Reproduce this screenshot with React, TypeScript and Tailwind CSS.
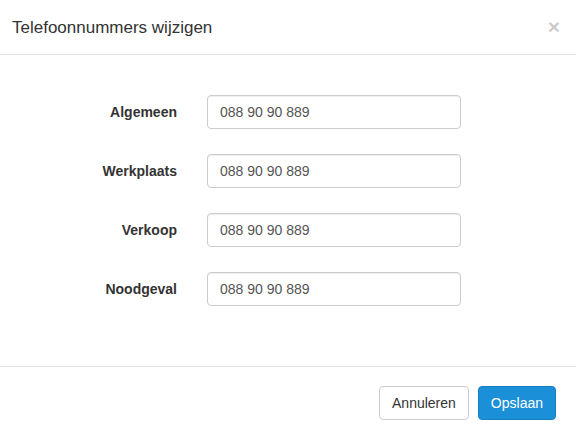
import React from "react";

const rows = ["Algemeen", "Werkplaats", "Verkoop", "Noodgeval"];

export default function App() {
  return (
    <div
      className="w-[576px] h-[440px] bg-white flex flex-col text-[#333] overflow-hidden"
      style={{ fontFamily: '"Liberation Sans", Arial, sans-serif' }}
    >
      <div className="h-[55px] border-b border-[#e5e5e5] flex items-center justify-between pl-[12px] pr-[16px] shrink-0">
        <h4 className="text-[17px] leading-none text-[#333] font-normal">Telefoonnummers wijzigen</h4>
        <span className="text-[21px] font-bold leading-none text-black opacity-20 -mt-[2px]">×</span>
      </div>
      <div className="h-[312px] pt-[40px] flex flex-col gap-[25px] shrink-0 border-b border-[#e5e5e5]">
        {rows.map((r) => (
          <div key={r} className="flex items-center h-[34px]">
            <label className="w-[177px] text-right font-bold text-[14px] text-[#333]">{r}</label>
            <div className="ml-[30px] w-[254px] h-[34px] border border-[#ccc] rounded-[4px] flex items-center pl-[12px] text-[14px] text-[#555] shadow-[inset_0_1px_1px_rgba(0,0,0,0.075)]">
              088 90 90 889
            </div>
          </div>
        ))}
      </div>
      <div className="flex-1 flex justify-end items-start pt-[19px] pr-[20px] gap-[9px]">
        <button className="h-[34px] px-[12px] border border-[#ccc] rounded-[4px] bg-white text-[14px] text-[#333]">
          Annuleren
        </button>
        <button className="h-[34px] px-[12px] border border-[#1780c4] rounded-[4px] bg-[#1b8fd8] text-[14px] text-white">
          Opslaan
        </button>
      </div>
    </div>
  );
}
